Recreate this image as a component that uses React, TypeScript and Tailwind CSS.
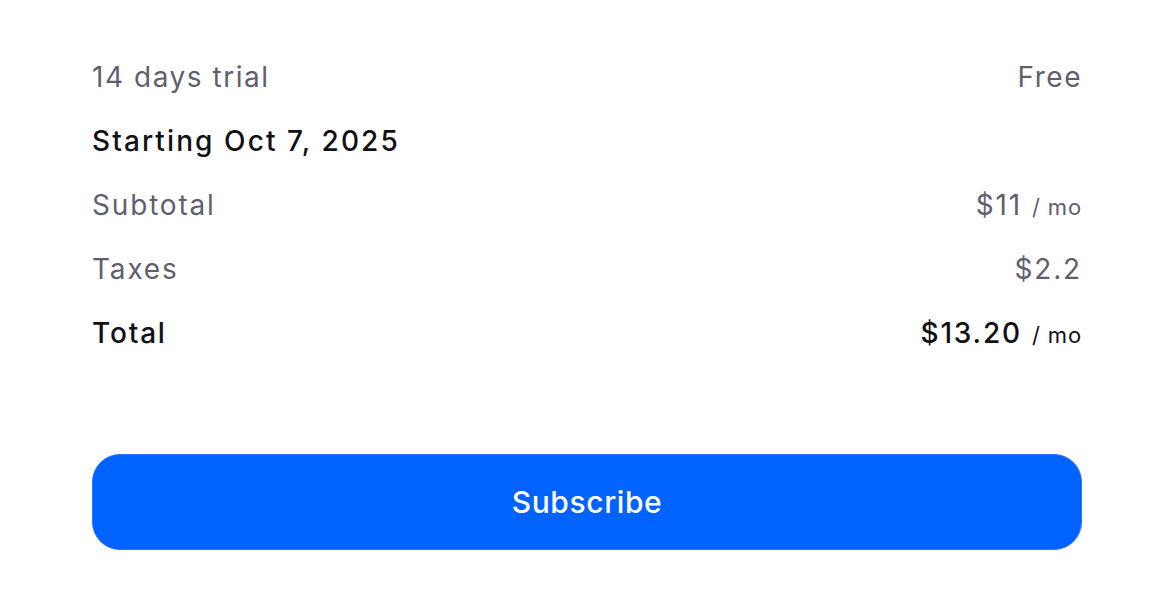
import React from "react";

export default function App() {
  const font = { fontFamily: "Inter, 'Noto Sans', sans-serif" };
  return (
    <div className="w-[1162px] h-[612px] bg-white" style={font}>
      <div className="pl-[92px] pr-[80px] pt-[56px] flex flex-col">
        <div className="flex justify-between items-center h-[42px] text-[28px] tracking-[0.055em] text-[#5f5f6e]">
          <span>14 days trial</span>
          <span>Free</span>
        </div>
        <div className="flex justify-between items-center h-[42px] mt-[22px] text-[28px] tracking-[0.075em] text-[#111114] font-medium">
          <span>Starting Oct 7, 2025</span>
        </div>
        <div className="flex justify-between items-center h-[42px] mt-[22px] text-[28px] tracking-[0.065em] text-[#5f5f6e]">
          <span>Subtotal</span>
          <span className="flex items-baseline gap-[10px]">
            <span>$11</span>
            <span className="text-[22px] tracking-[0.04em]">/ mo</span>
          </span>
        </div>
        <div className="flex justify-between items-center h-[42px] mt-[22px] text-[28px] tracking-[0.065em] text-[#5f5f6e]">
          <span>Taxes</span>
          <span>$2.2</span>
        </div>
        <div className="flex justify-between items-center h-[42px] mt-[22px] text-[28px] tracking-[0.065em] text-[#111114] font-medium">
          <span>Total</span>
          <span className="flex items-baseline gap-[10px]">
            <span>$13.20</span>
            <span className="text-[22px] tracking-[0.04em] font-normal">/ mo</span>
          </span>
        </div>
        <button className="mt-[100px] h-[96px] w-full rounded-[28px] bg-[#0062ff] border border-[#2f74ff] text-white text-[30px] tracking-[0.02em] font-medium">
          Subscribe
        </button>
      </div>
    </div>
  );
}
